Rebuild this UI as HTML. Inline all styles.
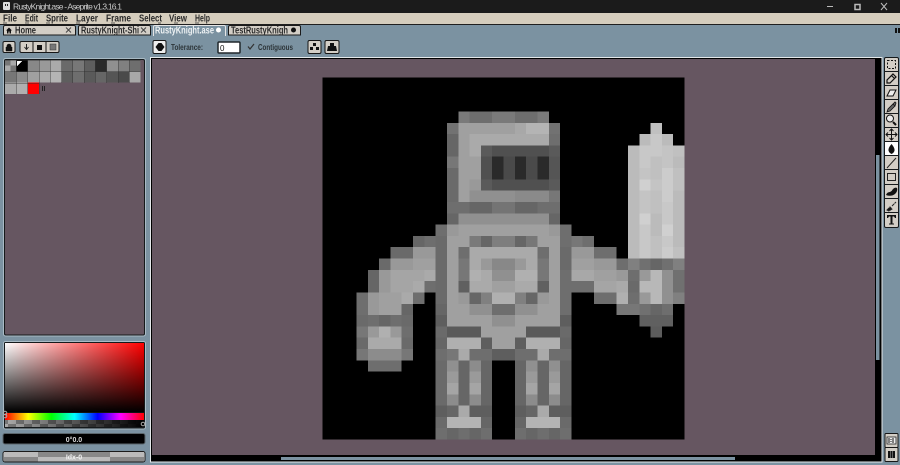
<!DOCTYPE html>
<html><head><meta charset="utf-8"><title>RustyKnight.ase - Aseprite</title>
<style>
html,body{margin:0;padding:0;background:#7b92a1;overflow:hidden;width:900px;height:465px}
svg{display:block;position:absolute;left:0;top:0}
.m{font:bold 10px "Liberation Sans",sans-serif;fill:#2a2a2a}
.t{font:bold 10px "Liberation Sans",sans-serif;fill:#2a2a2a}
.c{font:bold 8.500px "Liberation Sans",sans-serif;fill:#2c3438}
.b{fill:#d3cec6;stroke:#161616;stroke-width:1}
</style></head><body>
<svg width="900" height="465" viewBox="0 0 900 465" xmlns="http://www.w3.org/2000/svg">
<defs>
<linearGradient id="h" x1="0" x2="1" y1="0" y2="0"><stop offset="0" stop-color="#fff"/><stop offset="1" stop-color="#f00"/></linearGradient>
<linearGradient id="v" x1="0" x2="0" y1="0" y2="1"><stop offset="0" stop-color="#000" stop-opacity="0"/><stop offset="1" stop-color="#000"/></linearGradient>
<linearGradient id="r" x1="0" x2="1" y1="0" y2="0"><stop offset="0" stop-color="#f00"/><stop offset=".167" stop-color="#ff0"/><stop offset=".333" stop-color="#0f0"/><stop offset=".5" stop-color="#0ff"/><stop offset=".667" stop-color="#00f"/><stop offset=".833" stop-color="#f0f"/><stop offset="1" stop-color="#f00"/></linearGradient>
<linearGradient id="af" x1="0" x2="1" y1="0" y2="0"><stop offset="0" stop-color="#000" stop-opacity="0"/><stop offset="1" stop-color="#000"/></linearGradient>
<pattern id="ck" width="16" height="8" patternUnits="userSpaceOnUse"><rect width="16" height="8" fill="#777"/><rect width="8" height="4" fill="#aaa"/><rect x="8" y="4" width="8" height="4" fill="#aaa"/></pattern>
</defs>

<!-- title bar -->
<rect width="900" height="13" fill="#1b1b1b"/>
<rect x="3" y="2" width="7" height="8" rx="1" fill="#ddd"/><rect x="5" y="4" width="1" height="2" fill="#222"/><rect x="7" y="4" width="1" height="2" fill="#222"/>
<text x="13" y="9.500" textLength="109" lengthAdjust="spacing" style="font:8.500px 'Liberation Sans',sans-serif;fill:#c9c9c9">RustyKnight.ase - Aseprite v1.3.16.1</text>
<path d="M827 6.500h6" stroke="#bbb"/>
<rect x="855" y="4.500" width="5" height="5" fill="none" stroke="#bbb" stroke-width="1.500"/>
<path d="M881 3l6 7M887 3l-6 7" stroke="#bbb"/>

<!-- menu -->
<rect y="13" width="900" height="11" fill="#d5cdbd"/>
<rect y="24" width="900" height="1" fill="#1f1f1f"/>
<rect y="25" width="900" height="12" fill="#7b92a1"/>
<rect x="895" y="28" width="2" height="5" fill="#111"/><rect x="898" y="28" width="2" height="5" fill="#111"/>
<text class="m" y="21.500" x="3" textLength="14" lengthAdjust="spacingAndGlyphs">File</text>
<text class="m" y="21.500" x="25" textLength="13" lengthAdjust="spacingAndGlyphs">Edit</text>
<text class="m" y="21.500" x="46" textLength="22" lengthAdjust="spacingAndGlyphs">Sprite</text>
<text class="m" y="21.500" x="76" textLength="22" lengthAdjust="spacingAndGlyphs">Layer</text>
<text class="m" y="21.500" x="106" textLength="25" lengthAdjust="spacingAndGlyphs">Frame</text>
<text class="m" y="21.500" x="139" textLength="23" lengthAdjust="spacingAndGlyphs">Select</text>
<text class="m" y="21.500" x="169" textLength="18" lengthAdjust="spacingAndGlyphs">View</text>
<text class="m" y="21.500" x="195" textLength="15" lengthAdjust="spacingAndGlyphs">Help</text>
<path d="M3 23h4M25 23h4M46 23h4M76 23h4M111 23h4M158 23h3M174 23h4M195 23h4" stroke="#333" stroke-width=".7"/>

<!-- tabs -->
<path d="M3.500 35V27q0-1.500 1.500-1.500H74q1.500 0 1.500 1.500v8z" fill="#d3cec6" stroke="#1a1a1a"/>
<path d="M6 30.500l3-3 3 3h-1v3h-1.500v-2h-1v2H7v-3z" fill="#111"/>
<text class="t" x="15" y="33.500" textLength="21" lengthAdjust="spacingAndGlyphs">Home</text>
<path d="M66 27.500l5 5M71 27.500l-5 5" stroke="#444"/>
<path d="M78.500 35V27q0-1.500 1.500-1.500H149q1.500 0 1.500 1.500v8z" fill="#d3cec6" stroke="#1a1a1a"/>
<text class="t" x="81" y="33.500" textLength="58" lengthAdjust="spacingAndGlyphs">RustyKnight-Shi</text>
<path d="M141 27.500l5 5M146 27.500l-5 5" stroke="#444"/>
<path d="M153.500 36V27q0-1.500 1.500-1.500H224q1.500 0 1.500 1.500v9" fill="#7b92a1" stroke="#e5e5e5"/>
<text class="t" x="155" y="33.500" textLength="59" lengthAdjust="spacingAndGlyphs" style="fill:#eef2f4">RustyKnight.ase</text>
<circle cx="218.500" cy="30" r="2.500" fill="#fff"/>
<path d="M228.500 35V27q0-1.500 1.500-1.500H299q1.500 0 1.500 1.500v8z" fill="#d3cec6" stroke="#1a1a1a"/>
<text class="t" x="231" y="33.500" textLength="57" lengthAdjust="spacingAndGlyphs">TestRustyKnigh</text>
<circle cx="293.500" cy="30" r="2.500" fill="#111"/>

<!-- context bar -->
<rect x="153" y="40.500" width="13" height="13" rx="1.500" fill="#eee" stroke="#161616"/>
<path d="M155.500 47l3-4h3l3 4-3 4h-3z" fill="#111"/>
<text class="c" x="171" y="50" textLength="32" lengthAdjust="spacingAndGlyphs">Tolerance:</text>
<rect x="218" y="42" width="22" height="11" rx="1" fill="#fff" stroke="#20272b" stroke-width="1.500"/>
<text x="220" y="51" style="font:8px 'Liberation Sans',sans-serif;fill:#111">0</text>
<path d="M248 46.500l2 2.500 4-5" fill="none" stroke="#333" stroke-width="1.200"/>
<text class="c" x="258" y="50" textLength="35" lengthAdjust="spacingAndGlyphs">Contiguous</text>
<rect x="308" y="40.500" width="13" height="13" rx="1.500" class="b"/>
<path d="M313 43h3v3h-3zM310 47h3v3h-3zM316 47h3v3h-3z" fill="#111"/>
<rect x="325" y="40.500" width="14" height="13" rx="1.500" class="b"/>
<path d="M330 43h4v3h2l1 5h-10l1-5h2z" fill="#111"/>

<!-- left buttons -->
<rect x="3" y="41.500" width="12" height="11" rx="1.500" class="b"/>
<path d="M6 47h6v4H6zM7 47v-2q2-2 4 0v2" fill="#111" stroke="#111" stroke-width=".5"/>
<rect x="20" y="41.500" width="39" height="11" rx="1.500" class="b"/>
<path d="M33 42v11M46 42v11" stroke="#161616"/>
<path d="M26.500 44v5M24.500 47l2 2.500 2-2.500" fill="none" stroke="#222"/>
<rect x="37" y="45" width="5" height="5" fill="#111"/>
<rect x="50" y="44" width="6" height="6" fill="#777" stroke="#333" stroke-width=".5"/>

<!-- palette panel -->
<rect x="3.500" y="58.500" width="142" height="277.500" rx="2" fill="none" stroke="#a9bac4"/>
<rect x="4.500" y="59.500" width="140" height="275.500" rx="1.500" fill="#665661" stroke="#15191b"/>
<g shape-rendering="crispEdges">
<rect x="5" y="60" width="11.300" height="11.400" fill="#aaa"/><rect x="5" y="60" width="5.600" height="5.700" fill="#777"/><rect x="10.600" y="65.700" width="5.700" height="5.700" fill="#777"/>
<rect x="16.300" y="60" width="11.300" height="11.400" fill="#000"/><path d="M17 61h5l-5 5z" fill="#fff"/>
<rect x="27.600" y="60" width="11.300" height="11.400" fill="#888"/><rect x="38.900" y="60" width="11.300" height="11.400" fill="#999"/><rect x="50.200" y="60" width="11.300" height="11.400" fill="#aaa"/><rect x="61.500" y="60" width="11.300" height="11.400" fill="#6a6a6a"/><rect x="72.800" y="60" width="11.300" height="11.400" fill="#777"/><rect x="84.100" y="60" width="11.300" height="11.400" fill="#5e5e5e"/><rect x="95.400" y="60" width="11.300" height="11.400" fill="#2a2a2a"/><rect x="106.700" y="60" width="11.300" height="11.400" fill="#909090"/><rect x="118" y="60" width="11.300" height="11.400" fill="#808080"/><rect x="129.300" y="60" width="11" height="11.400" fill="#6e6e6e"/>
<rect x="5" y="71.400" width="11.300" height="11.300" fill="#777"/><rect x="16.300" y="71.400" width="11.300" height="11.300" fill="#8c8c8c"/><rect x="27.600" y="71.400" width="11.300" height="11.300" fill="#a0a0a0"/><rect x="38.900" y="71.400" width="11.300" height="11.300" fill="#aaa"/><rect x="50.200" y="71.400" width="11.300" height="11.300" fill="#b4b4b4"/><rect x="61.500" y="71.400" width="11.300" height="11.300" fill="#5e5e5e"/><rect x="72.800" y="71.400" width="11.300" height="11.300" fill="#6e6e6e"/><rect x="84.100" y="71.400" width="11.300" height="11.300" fill="#5a5a5a"/><rect x="95.400" y="71.400" width="11.300" height="11.300" fill="#666"/><rect x="106.700" y="71.400" width="11.300" height="11.300" fill="#555"/><rect x="118" y="71.400" width="11.300" height="11.300" fill="#4a4a4a"/><rect x="129.300" y="71.400" width="11" height="11.300" fill="#a8a8a8"/>
<rect x="5" y="82.700" width="11.300" height="11.300" fill="#aaa"/><rect x="16.300" y="82.700" width="11.300" height="11.300" fill="#b0b0b0"/><rect x="27.600" y="82.700" width="11.300" height="11.300" fill="#f00"/>
<path d="M5 60h135.300M5 71.500h135.300M5 83h34M16.300 60v34M27.600 60v34M39 60v34M50.200 60v23M61.500 60v23M72.800 60v23M84.100 60v23M95.400 60v23M106.700 60v23M118 60v23M129.300 60v23" stroke="#2a2a2a" stroke-width=".4" fill="none"/>
<rect x="42" y="86" width="1" height="5" fill="#222"/><rect x="44" y="86" width="1" height="5" fill="#222"/>
</g>

<!-- colour selector -->
<rect x="3.500" y="341.500" width="142" height="87.500" rx="2" fill="#15191b" stroke="#a9bac4"/>
<rect x="5" y="343" width="139" height="70" fill="#111"/>
<rect x="5" y="343" width="139" height="69" fill="url(#h)"/><rect x="5" y="343" width="139" height="69" fill="url(#v)"/>
<rect x="5" y="413" width="139" height="7" fill="url(#r)"/>
<rect x="5" y="420" width="139" height="7" fill="url(#ck)"/><rect x="5" y="420" width="139" height="7" fill="url(#af)"/>
<circle cx="5" cy="413" r="1.800" fill="none" stroke="#aaa"/><circle cx="5" cy="416" r="1.800" fill="none" stroke="#aaa"/>
<circle cx="143" cy="424" r="1.800" fill="none" stroke="#aaa"/>

<!-- color bar -->
<rect x="3" y="433.500" width="142" height="10.500" rx="2" fill="#000" stroke="#5b666c"/>
<text x="74" y="441.800" text-anchor="middle" style="font:bold 7px 'Liberation Sans',sans-serif;fill:#ddd">0°0.0</text>
<rect x="3" y="451.500" width="142" height="10.500" rx="2" fill="#d8d8d8" stroke="#1b1b1b"/>
<rect x="4" y="452" width="34" height="5" fill="#bbb"/><rect x="38" y="452" width="72" height="5" fill="#888"/><rect x="110" y="452" width="34" height="5" fill="#bbb"/>
<rect x="4" y="457" width="34" height="4.500" fill="#888"/><rect x="38" y="457" width="72" height="4.500" fill="#bbb"/><rect x="110" y="457" width="34" height="4.500" fill="#888"/>
<text x="74" y="459.500" text-anchor="middle" style="font:bold 7px 'Liberation Sans',sans-serif;fill:#f2f2f2">Idx-0</text>

<!-- editor -->
<rect x="150.500" y="57.500" width="731.500" height="404.500" fill="#000" stroke="#e4e8ea"/>
<rect x="152" y="59" width="723" height="396" fill="#665661"/>
<rect x="876" y="155" width="3.500" height="205" fill="#7b92a1"/>
<rect x="281" y="457" width="454" height="3" fill="#7b92a1"/>

<!-- canvas -->
<svg x="322.500" y="77.500" width="362" height="362" viewBox="0 0 32 32" shape-rendering="crispEdges" fill="none" stroke-width="1">
<rect width="32" height="32" fill="#000"/>
<path stroke="#7a7a7a" d="M12 3.500h1M15 3.500h2M19 3.500h1"/><path stroke="#6e6e6e" d="M13 3.500h2M17 3.500h2"/>
<path stroke="#727272" d="M11 4.500h1M20 4.500h1"/><path stroke="#a0a0a0" d="M12 4.500h5"/><path stroke="#a8a8a8" d="M17 4.500h1"/><path stroke="#b4b4b4" d="M18 4.500h2"/>
<path stroke="#666" d="M11 5.500h1"/><path stroke="#a0a0a0" d="M12 5.500h1"/><path stroke="#aaa" d="M13 5.500h7"/><path stroke="#6e6e6e" d="M20 5.500h1"/>
<path stroke="#666" d="M11 6.500h1"/><path stroke="#a0a0a0" d="M12 6.500h1"/><path stroke="#aaa" d="M13 6.500h1"/><path stroke="#5a5a5a" d="M14 6.500h1M20 6.500h1"/><path stroke="#505050" d="M15 6.500h5"/>
<path stroke="#777" d="M11 7.500h1"/><path stroke="#6a6a6a" d="M11 8.500h1"/><path stroke="#a0a0a0" d="M12 7.500h2M12 8.500h2"/><path stroke="#505050" d="M14 7.500h1M14 8.500h1"/><path stroke="#2a2a2a" d="M15 7.500h1M17 7.500h1M19 7.500h1M15 8.500h1M17 8.500h1M19 8.500h1"/><path stroke="#4a4a4a" d="M16 7.500h1M18 7.500h1M16 8.500h1M18 8.500h1"/><path stroke="#555" d="M20 7.500h1M20 8.500h1"/>
<path stroke="#6a6a6a" d="M11 9.500h1M11 10.500h1"/><path stroke="#a0a0a0" d="M12 9.500h1M12 10.500h1"/><path stroke="#999" d="M13 9.500h1"/><path stroke="#5a5a5a" d="M14 9.500h1M20 9.500h1"/><path stroke="#505050" d="M15 9.500h5"/>
<path stroke="#909090" d="M13 10.500h4"/><path stroke="#8a8a8a" d="M17 10.500h3"/><path stroke="#777" d="M20 10.500h1"/>
<path stroke="#6e6e6e" d="M11 11.500h2M19 11.500h2"/><path stroke="#666" d="M13 11.500h2M17 11.500h2"/><path stroke="#747474" d="M15 11.500h2"/>
<path stroke="#666" d="M11 12.500h1M20 12.500h1"/><path stroke="#909090" d="M12 12.500h8"/>
<!-- row 13 -->
<path stroke="#6e6e6e" d="M10 13.500h1M21 13.500h1"/><path stroke="#999" d="M11 13.500h1M20 13.500h1"/><path stroke="#a0a0a0" d="M12 13.500h8"/>
<!-- row 14 -->
<path stroke="#666" d="M8 14.500h1M14 14.500h1M17 14.500h1"/><path stroke="#6e6e6e" d="M9 14.500h1M21 14.500h1M23 14.500h1"/><path stroke="#6a6a6a" d="M10 14.500h1"/><path stroke="#a0a0a0" d="M11 14.500h2M19 14.500h2"/><path stroke="#7a7a7a" d="M13 14.500h1"/><path stroke="#7e7e7e" d="M15 14.500h2"/><path stroke="#777" d="M18 14.500h1M22 14.500h1"/>
<!-- row 15 -->
<path stroke="#6a6a6a" d="M6 15.500h2M10 15.500h1M21 15.500h1"/><path stroke="#999" d="M8 15.500h2M22 15.500h2"/><path stroke="#a0a0a0" d="M11 15.500h1M20 15.500h1"/><path stroke="#6e6e6e" d="M12 15.500h1M19 15.500h1M24 15.500h2"/><path stroke="#aaa" d="M13 15.500h6"/>
<!-- row 16 -->
<path stroke="#6a6a6a" d="M5 16.500h1M10 16.500h1M21 16.500h1"/><path stroke="#999" d="M6 16.500h2M14 16.500h1M17 16.500h1M24 16.500h2"/><path stroke="#a0a0a0" d="M8 16.500h2M11 16.500h1M20 16.500h1M22 16.500h2"/><path stroke="#777" d="M12 16.500h1M19 16.500h1"/><path stroke="#aaa" d="M13 16.500h1M18 16.500h1"/><path stroke="#888" d="M15 16.500h2"/>
<path stroke="#6e6e6e" d="M26 16.500h1"/><path stroke="#808080" d="M27 16.500h1M31 16.500h1"/><path stroke="#707070" d="M28 16.500h1M30 16.500h1"/><path stroke="#666" d="M29 16.500h1"/>
<!-- row 17 -->
<path stroke="#666" d="M4 17.500h1"/><path stroke="#999" d="M5 17.500h1M26 17.500h1M28 17.500h1"/><path stroke="#a5a5a5" d="M6 17.500h3"/><path stroke="#aaa" d="M9 17.500h1M14 17.500h1"/><path stroke="#6a6a6a" d="M10 17.500h1"/><path stroke="#a0a0a0" d="M11 17.500h1M20 17.500h1M24 17.500h2"/><path stroke="#777" d="M12 17.500h1M19 17.500h1"/><path stroke="#b0b0b0" d="M13 17.500h1M17 17.500h2"/><path stroke="#909090" d="M15 17.500h2M30 17.500h1"/><path stroke="#6e6e6e" d="M21 17.500h1M27 17.500h1"/><path stroke="#a8a8a8" d="M22 17.500h2"/><path stroke="#b8b8b8" d="M29 17.500h1"/><path stroke="#707070" d="M31 17.500h1"/>
<!-- row 18 -->
<path stroke="#666" d="M4 18.500h1"/><path stroke="#999" d="M5 18.500h1"/><path stroke="#a5a5a5" d="M6 18.500h2M24 18.500h2"/><path stroke="#aaa" d="M8 18.500h1M13 18.500h2M17 18.500h2M26 18.500h1"/><path stroke="#6e6e6e" d="M9 18.500h1M21 18.500h3"/><path stroke="#6a6a6a" d="M10 18.500h1M27 18.500h1"/><path stroke="#a0a0a0" d="M11 18.500h1M15 18.500h2M20 18.500h1"/><path stroke="#606060" d="M12 18.500h1M19 18.500h1"/><path stroke="#b8b8b8" d="M28 18.500h2"/><path stroke="#909090" d="M30 18.500h1"/><path stroke="#707070" d="M31 18.500h1"/>
<!-- row 19 -->
<path stroke="#6e6e6e" d="M3 19.500h1M8 19.500h1M21 19.500h1M24 19.500h2M27 19.500h1"/><path stroke="#999" d="M4 19.500h1M12 19.500h1M19 19.500h1M28 19.500h1"/><path stroke="#a0a0a0" d="M5 19.500h2M11 19.500h1M20 19.500h1"/><path stroke="#aaa" d="M7 19.500h1"/><path stroke="#6a6a6a" d="M10 19.500h1"/><path stroke="#666" d="M13 19.500h1M18 19.500h1"/><path stroke="#808080" d="M14 19.500h1M17 19.500h1M31 19.500h1"/><path stroke="#b0b0b0" d="M15 19.500h2M26 19.500h1"/><path stroke="#b8b8b8" d="M29 19.500h1"/><path stroke="#909090" d="M30 19.500h1"/>
<!-- row 20 -->
<path stroke="#6e6e6e" d="M3 20.500h1M15 20.500h2M21 20.500h1M30 20.500h1"/><path stroke="#999" d="M4 20.500h1"/><path stroke="#a0a0a0" d="M5 20.500h2M11 20.500h2M19 20.500h2"/><path stroke="#666" d="M7 20.500h1M10 20.500h1M29 20.500h1"/><path stroke="#909090" d="M13 20.500h2M17 20.500h2"/><path stroke="#777" d="M26 20.500h2"/><path stroke="#707070" d="M28 20.500h1"/>
<!-- row 21 -->
<path stroke="#6a6a6a" d="M3 21.500h1M7 21.500h1"/><path stroke="#6e6e6e" d="M4 21.500h1M6 21.500h1"/><path stroke="#666" d="M5 21.500h1"/><path stroke="#5e5e5e" d="M10 21.500h1M21 21.500h1"/><path stroke="#a0a0a0" d="M11 21.500h4M17 21.500h4"/><path stroke="#909090" d="M15 21.500h2"/><path stroke="#606060" d="M28 21.500h3"/>
<!-- row 22 -->
<path stroke="#777" d="M3 22.500h1"/><path stroke="#999" d="M4 22.500h1M6 22.500h1"/><path stroke="#b0b0b0" d="M5 22.500h1"/><path stroke="#6e6e6e" d="M7 22.500h1"/><path stroke="#6a6a6a" d="M10 22.500h1M21 22.500h1"/><path stroke="#5a5a5a" d="M11 22.500h3M18 22.500h3"/><path stroke="#a0a0a0" d="M14 22.500h4"/><path stroke="#5c5c5c" d="M29 22.500h1"/>
<!-- row 23 -->
<path stroke="#6a6a6a" d="M3 23.500h1M7 23.500h1"/><path stroke="#aaa" d="M4 23.500h3"/><path stroke="#666" d="M10 23.500h1M21 23.500h1"/><path stroke="#b0b0b0" d="M11 23.500h3M18 23.500h3"/><path stroke="#5e5e5e" d="M14 23.500h1M17 23.500h1"/><path stroke="#a0a0a0" d="M15 23.500h2"/>
<!-- row 24 -->
<path stroke="#777" d="M3 24.500h1M7 24.500h1M11 24.500h1"/><path stroke="#8c8c8c" d="M4 24.500h3"/><path stroke="#6e6e6e" d="M10 24.500h1M13 24.500h2M17 24.500h2M20 24.500h2"/><path stroke="#aaa" d="M12 24.500h1M19 24.500h1"/><path stroke="#5e5e5e" d="M15 24.500h2"/>
<!-- row 25 -->
<path stroke="#6e6e6e" d="M4 25.500h3"/><path stroke="#6a6a6a" d="M10 25.500h1"/><path stroke="#909090" d="M11 25.500h1M18 25.500h1M20 25.500h1"/><path stroke="#666" d="M12 25.500h1M14 25.500h1M17 25.500h1M19 25.500h1M21 25.500h1"/><path stroke="#8c8c8c" d="M13 25.500h1"/>
<!-- rows 26-28 -->
<path stroke="#6a6a6a" d="M10 26.500h1M10 27.500h1M10 28.500h1"/><path stroke="#666" d="M12 26.500h1M14 26.500h1M17 26.500h1M19 26.500h1M21 26.500h1M12 27.500h1M14 27.500h1M17 27.500h1M19 27.500h1M21 27.500h1M12 28.500h1M14 28.500h1M17 28.500h1M19 28.500h1M21 28.500h1"/>
<path stroke="#9a9a9a" d="M11 26.500h1M13 26.500h1M18 26.500h1M20 26.500h1"/><path stroke="#a5a5a5" d="M11 27.500h1M13 27.500h1M18 27.500h1M20 27.500h1"/><path stroke="#8c8c8c" d="M11 28.500h1M13 28.500h1M18 28.500h1M20 28.500h1"/>
<!-- row 29 -->
<path stroke="#5e5e5e" d="M10 29.500h1M13 29.500h2M17 29.500h1M20 29.500h2"/><path stroke="#666" d="M11 29.500h1M18 29.500h1"/><path stroke="#aaa" d="M12 29.500h1M19 29.500h1"/>
<!-- row 30 -->
<path stroke="#6a6a6a" d="M10 30.500h1M21 30.500h1"/><path stroke="#b4b4b4" d="M11 30.500h3M18 30.500h3"/><path stroke="#666" d="M14 30.500h1M17 30.500h1"/>
<!-- row 31 -->
<path stroke="#6e6e6e" d="M10 31.500h1M12 31.500h1M14 31.500h1M17 31.500h1M19 31.500h1M21 31.500h1"/><path stroke="#666" d="M11 31.500h1M13 31.500h1M18 31.500h1M20 31.500h1"/>
<!-- sword -->
<path stroke="#c0c0c0" d="M29 4.500h1"/>
<path stroke="#bbb" d="M28 5.500h1M30 5.500h1M27 6.500h1M27 7.500h1M27 8.500h1M27 9.500h1M27 10.500h1M27 11.500h1M27 12.500h1M27 13.500h1M27 14.500h1M27 15.500h1M31 7.500h1M31 10.500h1M31 11.500h1M31 12.500h1M31 13.500h1M31 14.500h1M29 12.500h1M29 13.500h1"/>
<path stroke="#c8c8c8" d="M29 5.500h1M28 6.500h2M28 7.500h1M30 11.500h1M30 12.500h1M28 13.500h1M28 14.500h1M30 14.500h1M28 15.500h1"/>
<path stroke="#c4c4c4" d="M30 6.500h1M30 7.500h1M28 8.500h1M29 9.500h1M28 10.500h1M28 11.500h1"/>
<path stroke="#c0c0c0" d="M31 6.500h1M29 7.500h1M29 8.500h1M31 8.500h1M31 9.500h1M29 10.500h1M29 11.500h1M29 14.500h1M29 15.500h1M31 15.500h1"/>
<path stroke="#ccc" d="M30 8.500h1M30 9.500h1M30 10.500h1M30 15.500h1"/>
<path stroke="#d0d0d0" d="M28 9.500h1M28 12.500h1M30 13.500h1"/>
</svg>

<!-- right toolbar -->
<rect x="884.500" y="57.500" width="14" height="170" rx="1.500" fill="#d3cec6" stroke="#15191b"/>
<path d="M885 71.500h13M885 85.500h13M885 99.500h13M885 113.500h13M885 127.500h13M885 141.500h13M885 155.500h13M885 169.500h13M885 184.500h13M885 198.500h13M885 212.500h13" stroke="#15191b"/>
<rect x="885" y="142" width="13" height="13" fill="#fff"/>
<rect x="887.500" y="60.500" width="8" height="8" fill="none" stroke="#111" stroke-dasharray="2 1.500"/>
<path d="M887 83l0-3 6-6 3 3-6 6zM891.500 75.500l3 3" fill="none" stroke="#111" stroke-width="1.200"/>
<path d="M887 96l3-6h6l-3 6z" fill="#eee" stroke="#111"/>
<path d="M887 112l1-3 5-5 2 2-5 5zM893 104l2-2 1 1-1 3z" fill="#666" stroke="#111" stroke-width=".8"/>
<circle cx="890" cy="118.500" r="3.500" fill="#eee" stroke="#111"/><path d="M893 122l3 3" stroke="#111" stroke-width="2"/>
<path d="M891.500 129v11M886 134.500h11M889.500 131l2-2 2 2M889.500 138l2 2 2-2M888 132.500l-2 2 2 2M895 132.500l2 2-2 2" fill="none" stroke="#111"/>
<path d="M891.500 144q-3.500 4-3 6.500t3 3.500q2.500-1 3-3.500t-3-6.500z" fill="#111"/>
<path d="M887 168l9-10" stroke="#222"/>
<rect x="887.500" y="173.500" width="8" height="7" fill="none" stroke="#222"/>
<path d="M886 195q1-3 4-3 2-1 3-3 2-2 4-1 1 3-2 6-4 3-9 1z" fill="#111"/>
<path d="M887 210l3-3 2 2-3 2zM892 206l4-4" stroke="#222" fill="#111" stroke-dasharray="3 .5"/>
<path d="M887 215h9v3h-1l-1-1.500h-1.500v7h1.500v1h-5v-1h1.500v-7H889l-1 1.500h-1z" fill="#111"/>

<rect x="885" y="433.500" width="13" height="14" rx="1" class="b"/>
<rect x="887" y="437" width="9" height="7" fill="#eee" stroke="#222" stroke-width=".8"/>
<path d="M889 438v5M893 438v5M891 439v1M891 441v1" stroke="#111"/>
<rect x="885" y="447.500" width="13" height="14" rx="1" class="b"/>
<rect x="888" y="451" width="7" height="7" fill="#111"/><path d="M890.500 451v7M892.500 451v7" stroke="#999" stroke-width=".6"/>
</svg>
</body></html>
